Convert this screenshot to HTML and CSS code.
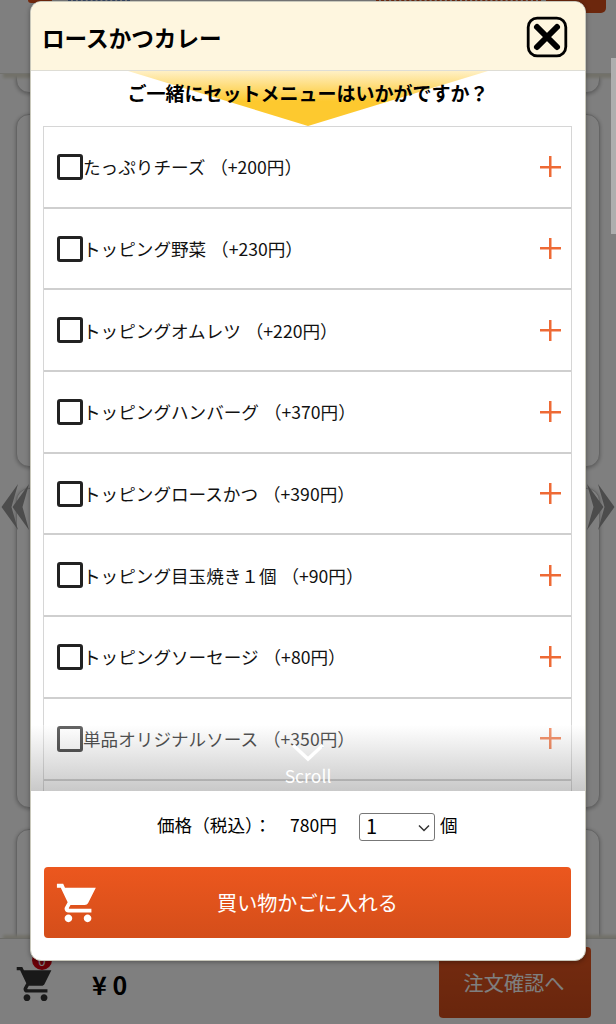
FILE: index.html
```html
<!DOCTYPE html>
<html lang="ja">
<head>
  <meta charset="UTF-8" />
  <title>ロースかつカレー</title>
  <meta name="viewport" content="width=device-width, initial-scale=1.0" />
  <link rel="stylesheet" href="styles.css">
</head>
<body>
  <svg class="defs">
    <symbol id="cart" viewBox="0 0 24 24">
      <path d="M7 18c-1.1 0-1.99.9-1.99 2S5.900 22 7 22s2-.9 2-2-.9-2-2-2zM1 2v2h2l3.600 7.590-1.350 2.450c-.16.280-.25.610-.25.960 0 1.100.9 2 2 2h12v-2H7.420c-.14 0-.25-.11-.25-.25l.03-.12.9-1.630h7.450c.75 0 1.410-.41 1.750-1.030L21.300 4H5.210l-.94-2H1zm16 16c-1.1 0-1.99.9-1.99 2s.89 2 1.990 2 2-.9 2-2-.9-2-2-2z"/>
    </symbol>
  </svg>

  <!-- Menu page -->
  <div class="page">
    <header class="page-header">
      <span class="logo"></span>
      <span class="blue-line"></span>
      <span class="orange-line"></span>
      <span class="header-btn"></span>
    </header>
    <main class="cards">
      <div class="card card-first"></div>
      <div class="card card-a"></div>
      <div class="card card-b"></div>
      <div class="card card-last"></div>
    </main>
    <footer class="page-footer">
      <div class="cart">
        <svg class="cart-icon"><use href="#cart"/></svg>
        <span class="badge">0</span>
      </div>
      <div class="total">¥ 0</div>
      <button class="confirm">注文確認へ</button>
    </footer>
    <svg class="arrow arrow-left" viewBox="0 0 30 48"><path d="M18 1 1.500 24 18 47 11.500 24zM29 1 12.500 24 29 47 22.500 24z"/></svg>
    <svg class="arrow arrow-right" viewBox="0 0 30 48"><path d="M12 1 28.500 24 12 47 18.500 24zM1 1 17.500 24 1 47 7.500 24z"/></svg>
  </div>

  <div class="overlay"></div>
  <div class="scrollbar"></div>

  <!-- Item modal -->
  <div class="modal">
    <div class="modal-header">
      <h1>ロースかつカレー</h1>
      <svg class="close" viewBox="0 0 42 42">
        <rect x="2.200" y="2.200" width="37.600" height="37.600" rx="9"/>
        <path d="M11 11 31 31M31 11 11 31"/>
      </svg>
    </div>

    <div class="modal-body">
      <div class="set-title">ご一緒にセットメニューはいかがですか？</div>
      <ul class="options">
        <li><span class="check"></span>たっぷりチーズ （+200円）<span class="plus"></span></li>
        <li><span class="check"></span>トッピング野菜 （+230円）<span class="plus"></span></li>
        <li><span class="check"></span>トッピングオムレツ （+220円）<span class="plus"></span></li>
        <li><span class="check"></span>トッピングハンバーグ （+370円）<span class="plus"></span></li>
        <li><span class="check"></span>トッピングロースかつ （+390円）<span class="plus"></span></li>
        <li><span class="check"></span>トッピング目玉焼き１個 （+90円）<span class="plus"></span></li>
        <li><span class="check"></span>トッピングソーセージ （+80円）<span class="plus"></span></li>
        <li><span class="check"></span>単品オリジナルソース （+350円）<span class="plus"></span></li>
        <li></li>
      </ul>
      <div class="scroll-hint">
        <svg viewBox="0 0 34 20"><path d="M2 2 17 16 32 2"/></svg>
        <span>Scroll</span>
      </div>
    </div>

    <div class="modal-footer">
      <div class="price-row">
        <span class="price-label">価格（税込）：</span>
        <span class="price">780円</span>
        <div class="qty">
          <select><option>1</option></select>
          <svg viewBox="0 0 12 8"><path d="M1 1.500 6 6.500 11 1.500"/></svg>
        </div>
        <span>個</span>
      </div>
      <button class="add-cart">
        <svg class="add-icon"><use href="#cart"/></svg>
        買い物かごに入れる
      </button>
    </div>
  </div>
</body>
</html>
```
FILE: styles.css
```css
* { margin: 0; padding: 0; box-sizing: border-box; }

body {
  height: 1024px;
  overflow: hidden;
  background: #fff;
  color: #000;
  font-family: "Noto Sans CJK JP", sans-serif;
  font-size: 17.6px;
}

.defs {
  display: none;
}

.page {
  position: relative;
  z-index: 0;
  height: 1024px;
  display: flex;
  flex-direction: column;
}

.page-header {
  position: relative;
  z-index: 1;
  height: 74px;
  display: flex;
  align-items: flex-start;
  padding: 0 10px 0 28px;
  background: #fff;
  border-bottom: 1px solid #e4e4dc;
  box-shadow: 3px 4px 3px #e4e2d2;
}

.logo {
  width: 24px;
  height: 3px;
  background: #e9541d;
  border-radius: 0 0 12px 12px;
}

.blue-line {
  width: 62px;
  margin-left: 16px;
  border-top: 1px dashed #6f8fc8;
}

.orange-line {
  width: 165px;
  margin-left: 246px;
  border-top: 1px dashed #e9541d;
}

.header-btn {
  width: 60px;
  height: 13px;
  margin-left: auto;
  background: #d84e1a;
  border-radius: 0 0 5px 5px;
}

.cards {
  flex: 1;
  overflow: hidden;
  padding: 0 16px;
  display: flex;
  flex-direction: column;
  gap: 21px;
}

.card {
  flex: none;
  background: #fff;
  border: 1px solid #c8c8c8;
  border-radius: 13px;
  box-shadow: 0 1px 4px rgba(0, 0, 0, 0.3);
}

.card-first {
  height: 40px;
  margin-top: -21px;
}

.card-a { height: 353px; }
.card-b { height: 320px; }
.card-last { height: 200px; }

.page-footer {
  position: relative;
  height: 86px;
  display: flex;
  align-items: flex-start;
  padding: 0 25px 0 15px;
  background: #fff;
  border-top: 1px solid #d8d8d0;
  box-shadow: 3px -3px 3px #e4e2d2;
}

.cart {
  position: relative;
  margin-top: 24px;
}

.cart-icon {
  display: block;
  width: 41px;
  height: 42px;
  fill: #333;
}

.badge {
  position: absolute;
  left: 17px;
  top: -13px;
  width: 20px;
  height: 20px;
  border-radius: 50%;
  background: #d8000f;
  color: #fff;
  font-size: 14px;
  line-height: 21px;
  text-align: center;
}

.total {
  margin: 27px 0 0 36px;
  font-size: 25px;
  font-weight: 700;
  line-height: 36px;
}

.confirm {
  width: 152px;
  height: 71px;
  margin: 8px 0 0 auto;
  padding-right: 2px;
  border: 0;
  border-radius: 4px;
  background: linear-gradient(#ea5720, #d24c1a);
  color: #fff;
  font: 20.2px "Noto Sans CJK JP", sans-serif;
}

.arrow {
  position: absolute;
  top: 483px;
  width: 30px;
  height: 48px;
  fill: #999;
}

.arrow-left { left: 0; }
.arrow-right { right: 0; }

.overlay {
  position: absolute;
  inset: 0;
  background: rgba(0, 0, 0, 0.5);
}

.scrollbar {
  position: absolute;
  right: 0;
  top: 58px;
  width: 5px;
  height: 176px;
  background: #aeaeae;
}

.modal {
  position: absolute;
  left: 30px;
  top: 1px;
  width: 556px;
  height: 960px;
  display: flex;
  flex-direction: column;
  overflow: hidden;
  background: #fff;
  border: 1px solid #c9c8bb;
  border-radius: 11px;
  box-shadow: 0 1px 5px rgba(0, 0, 0, 0.35);
}

.modal-header {
  flex: none;
  height: 69px;
  display: flex;
  align-items: center;
  justify-content: space-between;
  padding: 0 17px 0 11px;
  background: #fef6df;
  border-bottom: 1px solid #deddd5;
}

.modal-header h1 {
  font-size: 22.6px;
  font-weight: 700;
  line-height: 34px;
  margin-top: 3px;
}

.close {
  width: 42px;
  height: 42px;
  margin-top: 2px;
  fill: none;
  stroke: #000;
  stroke-width: 2.8;
}

.close path {
  stroke-width: 6;
  stroke-linecap: round;
}

.modal-body {
  position: relative;
  height: 720px;
  overflow: hidden;
}

/* yellow triangle pointing down at the option list */
.set-title {
  position: relative;
  z-index: 0;
  height: 55px;
  line-height: 44px;
  font-size: 19px;
  font-weight: 700;
  text-align: center;
}

.set-title::before {
  content: "";
  position: absolute;
  z-index: -1;
  left: 97px;
  top: 0;
  width: 360px;
  height: 55px;
  background: linear-gradient(#fff0c5, #fdc92f 55%);
  clip-path: polygon(0 0, 100% 0, 50% 100%);
}

.options {
  list-style: none;
  margin: 0 13px 0 12px;
  border: 1px solid #d6d6d6;
}

.options li {
  height: 81.7px;
  display: flex;
  align-items: center;
  padding: 0 10px 0 13px;
  border-bottom: 2px solid #cfcfcf;
  color: #111;
  white-space: pre;
  word-spacing: 1px;
}

.check {
  width: 26px;
  height: 26px;
  border: 3px solid #222;
  border-radius: 3px;
}

.plus {
  width: 21px;
  height: 21px;
  margin-left: auto;
  background:
    linear-gradient(#ee6a35, #ee6a35) center / 100% 2.5px no-repeat,
    linear-gradient(#ee6a35, #ee6a35) center / 2.5px 100% no-repeat;
}

.scroll-hint {
  position: absolute;
  left: 0;
  right: 0;
  bottom: 0;
  height: 66px;
  display: flex;
  flex-direction: column;
  align-items: center;
  padding-top: 18px;
  background: linear-gradient(rgba(255, 255, 255, 0.3), rgba(75, 75, 75, 0.3));
  color: #fff;
  font-size: 17.6px;
  line-height: 26px;
}

.scroll-hint svg {
  width: 34px;
  height: 20px;
  fill: none;
  stroke: #fff;
  stroke-width: 3.5;
}

.modal-footer {
  flex: 1;
  padding: 0 14px 0 13px;
}

.price-row {
  height: 76px;
  display: flex;
  align-items: center;
  padding: 0 0 9px 113px;
}

.price-label {
  width: 133px;
}

.price {
  width: 69px;
}

.qty {
  position: relative;
  width: 76px;
  height: 28px;
  margin: 4px 5px 0 0;
}

.qty select {
  display: block;
  width: 100%;
  height: 100%;
  padding: 0 0 2px 6px;
  appearance: none;
  border: 1px solid #777;
  border-radius: 3px;
  background: #fff;
  color: #000;
  font: 20px/24px "Noto Sans CJK JP", sans-serif;
}

.qty svg {
  position: absolute;
  right: 5px;
  top: 11px;
  width: 12px;
  height: 8px;
  fill: none;
  stroke: #333;
  stroke-width: 1.5;
}

.add-cart {
  position: relative;
  display: block;
  width: 100%;
  height: 71px;
  border: 0;
  border-radius: 4px;
  background: linear-gradient(#ec571e, #d44e1a);
  color: #fff;
  font: 20.1px "Noto Sans CJK JP", sans-serif;
}

.add-icon {
  position: absolute;
  left: 11px;
  top: 13px;
  width: 46px;
  height: 46px;
  fill: #fff;
}
```
